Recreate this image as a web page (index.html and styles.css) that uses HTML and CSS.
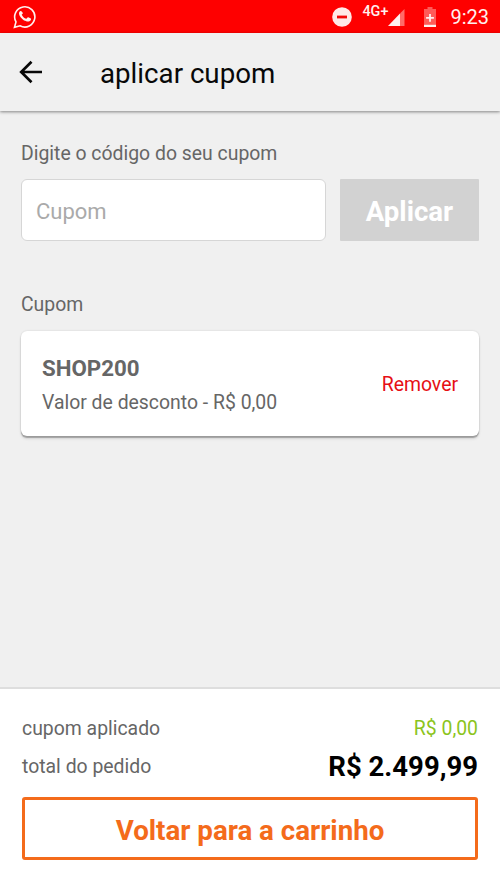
FILE: index.html
```html
<!DOCTYPE html>
<html lang="pt-BR">
<head>
<meta charset="utf-8">
<title>aplicar cupom</title>
<link rel="stylesheet" href="styles.css">
</head>
<body>
<div class="status">
  <svg class="chat" width="24" height="24" viewBox="0 0 24 24"><path fill="none" stroke="#fff0ee" stroke-width="1.6" d="M1.5 22.3l1.5-5.4A10.1 10.1 0 1 1 7 20.8z"/><path fill="#fff0ee" d="M8.7 6.7c-.3-.6-.7-.6-1-.6-.9 0-1.7 1-1.7 2.3 0 1.400 1 2.800 1.200 3 .2.300 2 3.200 5 4.400 2.500 1 3 .8 3.600.7.600 0 1.800-.7 2-1.400.3-.7.300-1.300.2-1.400-.1-.2-.3-.300-.6-.4l-2.100-1c-.3-.1-.5-.2-.7.100l-1 1.200c-.2.200-.4.300-.7.100-.3-.1-1.300-.5-2.400-1.500-.9-.8-1.500-1.800-1.700-2.100-.2-.3 0-.5.100-.6l.9-1.100v-.6z"/></svg>
  <div class="status-right">
    <svg class="dnd" width="20" height="20" viewBox="0 0 20 20"><circle cx="10" cy="10" r="9.800" fill="#ffe9e7"/><rect x="5" y="8.600" width="10" height="2.800" fill="#f20808"/></svg>
    <span class="net">4G+</span>
    <svg class="signal" width="17" height="17" viewBox="0 0 17 17"><path fill="#ff6b68" d="M12 4.500L16.500 0v17H12z"/><path fill="#fff0ee" d="M0 17L12 4.500V17z"/></svg>
    <svg class="battery" width="12" height="20" viewBox="0 0 12 20"><path fill="#ff5b58" d="M3.500 0h5v2H12v15H0V2h3.500z"/><path fill="#fff0ee" d="M5.100 7h1.800v3h3v1.800h-3v3H5.100v-3h-3V10h3zM0 17.500h12V20H0z"/></svg>
    <span class="time">9:23</span>
  </div>
</div>
<header class="bar">
  <svg class="back" width="24" height="24" viewBox="0 0 24 24"><path fill="none" stroke="#080808" stroke-width="2.700" d="M12.500 1.800L2.200 12l10.300 10.200M2.600 12H23"/></svg>
  <h1 class="title">aplicar cupom</h1>
</header>
<main class="content">
  <label class="label" for="code">Digite o código do seu cupom</label>
  <div class="form">
    <input class="input" id="code" type="text" placeholder="Cupom">
    <button class="apply">Aplicar</button>
  </div>
  <div class="label section">Cupom</div>
  <div class="card">
    <div>
      <div class="code">SHOP200</div>
      <div class="value">Valor de desconto - R$ 0,00</div>
    </div>
    <span class="remove">Remover</span>
  </div>
</main>
<footer class="footer">
  <div class="row"><span class="key">cupom aplicado</span><span class="discount">R$ 0,00</span></div>
  <div class="row total-row"><span class="key">total do pedido</span><span class="total">R$ 2.499,99</span></div>
  <button class="return">Voltar para a carrinho</button>
</footer>
</body>
</html>
```
FILE: styles.css
```css
* { box-sizing: border-box; }
body {
  margin: 0;
  height: 889px;
  display: flex;
  flex-direction: column;
  background: #f0f0f0;
  color: #666;
  font-family: Roboto, sans-serif;
  font-size: 19.4px;
  overflow: hidden;
}
svg { display: block; flex: none; }
span, .label, .code, .value { white-space: nowrap; }
.status {
  height: 33px;
  background: #fe0000;
  color: #fff0ee;
  display: flex;
  justify-content: space-between;
  padding: 0 11px 0 13px;
}
.chat { margin-top: 5px; }
.status-right { display: flex; }
.dnd { margin-top: 7px; }
.net { font-size: 14.4px; font-weight: 500; line-height: 16px; margin: 4px 0 0 10px; width: 27px; }
.signal { margin: 9px 0 0 -1px; }
.battery { margin: 7px 0 0 19px; }
.time { font-size: 20px; line-height: 35px; margin-left: 14px; }
.bar {
  height: 78px;
  display: flex;
  align-items: center;
  padding-left: 19px;
  background: #f0f0f0;
  box-shadow: 0 1px 3px rgba(0, 0, 0, .45);
}
.back { margin-bottom: 1px; }
.title { margin: 3px 0 0 57px; font-size: 27.7px; font-weight: 400; color: #080808; }
.content { flex: 1; padding: 31px 21px 0; }
.label { display: block; line-height: 24px; }
.form { display: flex; gap: 14px; margin-top: 13px; }
.input {
  width: 305px;
  height: 62px;
  border: 1px solid #d6d6d6;
  border-radius: 6px;
  background: #fff;
  padding: 2px 14px 0;
  font: 22px Roboto, sans-serif;
}
.input::placeholder { color: #aaa; opacity: 1; }
.apply {
  flex: 1;
  height: 62px;
  border: 0;
  border-radius: 1px;
  background: #d2d2d2;
  color: #fff;
  padding: 3px 0 0;
  font: 700 27.6px Roboto, sans-serif;
}
.section { margin-top: 52px; }
.card {
  height: 105px;
  margin-top: 14px;
  padding: 2px 21px 0;
  display: flex;
  align-items: center;
  justify-content: space-between;
  background: #fff;
  border-radius: 6px;
  box-shadow: 0 0 2px rgba(0, 0, 0, .15), 0 2px 1px rgba(0, 0, 0, .25), 0 3px 3px rgba(0, 0, 0, .1);
}
.code { font-size: 22.3px; font-weight: 700; line-height: 36px; }
.value { line-height: 34px; }
.remove { color: #e60f14; }
.footer {
  height: 202px;
  border-top: 2px solid #dedede;
  background: #fff;
  padding: 23px 22px 0;
}
.row { display: flex; justify-content: space-between; line-height: 34px; }
.total-row { line-height: 42px; }
.discount { color: #8bc41c; }
.total { color: #000; font-size: 27.5px; font-weight: 700; }
.return {
  display: block;
  width: 456px;
  height: 63px;
  margin-top: 9px;
  border: 3px solid #f46b1b;
  border-radius: 3px;
  background: #fff;
  color: #f46b1b;
  padding: 3px 0 0;
  font: 700 27.7px Roboto, sans-serif;
}
```
